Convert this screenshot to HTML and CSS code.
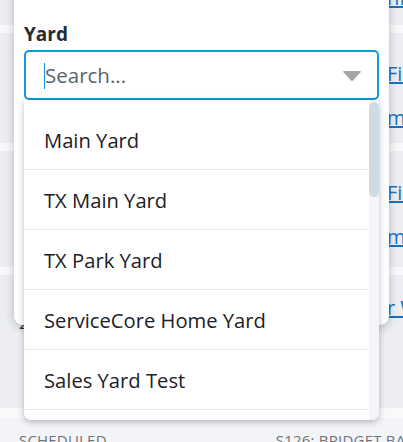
FILE: index.html
```html
<!DOCTYPE html>
<html>
<head>
<meta charset="utf-8">
<link rel="stylesheet" href="styles.css">
</head>
<body>
<div class="page">
  <div class="row row-a"><div class="links"><a class="link">nfo</a></div></div>
  <div class="band"></div>
  <div class="row row-b">
    <div class="links"><a class="link">Field</a><a class="link">more</a></div>
  </div>
  <div class="band"></div>
  <div class="row row-c">
    <div class="links"><a class="link">Field</a><a class="link">more</a></div>
  </div>
  <div class="band"></div>
  <div class="row row-d">
    <div class="links"><a class="link">r Work</a></div>
    <div class="num">2</div>
  </div>
  <div class="band band-last"></div>
  <div class="row row-e">
    <span class="status">SCHEDULED</span>
    <span class="status status-right">S126: BRIDGET BA</span>
  </div>
</div>

<div class="modal">
  <div class="field">
    <label class="label">Yard</label>
    <div class="input">
      <span class="caret"></span>
      <span class="placeholder">Search...</span>
      <svg class="arrow" width="20" height="12" viewBox="0 0 20 12">
        <path d="M2 1 H18 Q19.5 1 18.5 2.2 L11 10.5 Q10 11.5 9 10.5 L1.5 2.2 Q0.5 1 2 1 Z" fill="#a3a5a8"/>
      </svg>
    </div>
    <div class="dropdown">
      <ul class="options">
        <li class="option">Main Yard</li>
        <li class="option">TX Main Yard</li>
        <li class="option">TX Park Yard</li>
        <li class="option">ServiceCore Home Yard</li>
        <li class="option">Sales Yard Test</li>
        <li class="option"></li>
      </ul>
      <div class="scrollbar"><div class="thumb"></div></div>
    </div>
  </div>
</div>
</body>
</html>
```

FILE: styles.css
```css
html, body {
  margin: 0;
  padding: 0;
}
body {
  width: 403px;
  height: 442px;
  overflow: hidden;
  position: relative;
  background: #eef0f4;
  font-family: "Open Sans", "Noto Sans", sans-serif;
}
.page {
  width: 403px;
  height: 442px;
  overflow: hidden;
  display: flex;
  flex-direction: column;
}
.row {
  background: #eceef2;
  position: relative;
  overflow: hidden;
  flex-shrink: 0;
}
.band {
  height: 8px;
  background: #f8f9fb;
  flex-shrink: 0;
}
.band-last {
  height: 10px;
}
.row-a {
  height: 25px;
}
.row-a .links {
  padding-top: 0;
  margin-top: -15px;
}
.row-b { height: 110px; }
.row-c { height: 116px; }
.row-d { height: 133px; }
.row-e {
  height: 40px;
  background: #f3f4f8;
  display: flex;
  padding: 12px 0 0 19px;
}
.links {
  display: flex;
  flex-direction: column;
  gap: 18px;
  padding-left: 387px;
  padding-top: 28px;
}
.row-c .links { padding-top: 29px; }
.row-d .links { padding-top: 20px; }
.link {
  color: #1c70c0;
  text-decoration: underline;
  font-size: 20px;
  line-height: 26px;
  white-space: nowrap;
}
.num {
  position: absolute;
  left: 19px;
  top: 36px;
  font-size: 17px;
  color: #2b2f33;
}
.status {
  font-size: 15px;
  letter-spacing: 0.2px;
  color: #6f757b;
  white-space: nowrap;
}
.status-right {
  margin-left: 169px;
}
.modal {
  position: absolute;
  left: 14px;
  top: -30px;
  width: 375px;
  height: 355px;
  background: #fff;
  border-radius: 9px;
  box-shadow: 0 2px 10px rgba(40, 45, 55, 0.28);
  box-sizing: border-box;
  padding: 51px 10px 0 10px;
}
.field {
  position: relative;
}
.label {
  display: block;
  font-size: 19px;
  font-weight: 700;
  color: #272b30;
  line-height: 26px;
  margin-bottom: 3px;
}
.input {
  height: 50px;
  box-sizing: border-box;
  border: 2px solid #0f9ad8;
  border-radius: 5px;
  display: flex;
  align-items: center;
  padding: 0 15px 0 18px;
  background: #fff;
}
.caret {
  width: 1px;
  height: 26px;
  background: #1a8ed6;
  margin-top: 1px;
}
.placeholder {
  font-size: 20.5px;
  color: #59636c;
  flex: 1;
}
.arrow {
  display: block;
  margin-top: 2px;
}
.dropdown {
  position: absolute;
  left: 0;
  top: 79px;
  width: 355px;
  height: 320px;
  background: #fff;
  border-radius: 0 0 7px 7px;
  box-shadow: 0 2px 6px rgba(30, 35, 45, 0.3);
  display: flex;
  overflow: hidden;
}
.options {
  list-style: none;
  margin: 0;
  padding: 10px 0 0 0;
  flex: 1;
}
.option {
  height: 60px;
  box-sizing: border-box;
  border-bottom: 1px solid #e4e6ea;
  padding-left: 20px;
  display: flex;
  align-items: center;
  font-size: 20.2px;
  color: #1d2126;
}
.scrollbar {
  width: 10px;
  background: #f3f5f9;
  padding-top: 2px;
}
.thumb {
  height: 95px;
  background: #cfdbe2;
  border-radius: 5px;
}
```
